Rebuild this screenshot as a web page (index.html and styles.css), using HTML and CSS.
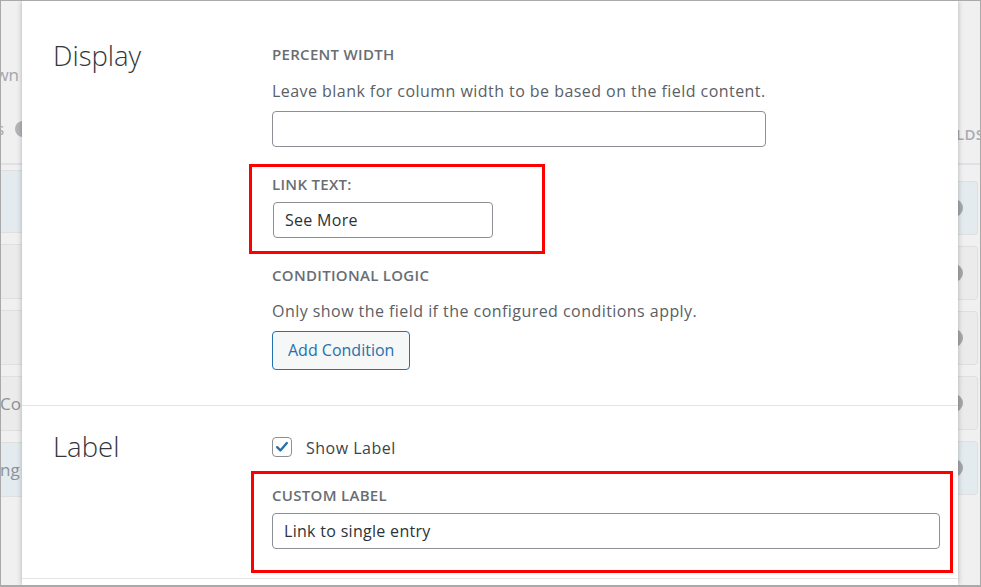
FILE: index.html
```html
<!DOCTYPE html>
<html lang="en">
<head>
<meta charset="utf-8">
<title>Field settings</title>
<link rel="stylesheet" href="styles.css">
</head>
<body>
<div class="frame">
  <div class="bg bg-left">
    <div class="bg-word bg-word-left">Dropdown</div>
    <div class="bg-help"><span class="bg-help-s">s</span><span class="bg-help-dot"></span></div>
    <div class="bg-line"></div>
    <div class="bg-rows bg-rows-left">
      <div class="bg-row blue r1"></div>
      <div class="bg-row gray"></div>
      <div class="bg-row gray"></div>
      <div class="bg-row gray"><span class="bg-row-text">Co</span></div>
      <div class="bg-row blue"><span class="bg-row-text">ng</span></div>
    </div>
  </div>

  <div class="modal">
    <section class="sec sec-display">
      <h2 class="sec-title">Display</h2>
      <div class="sec-body">
        <div class="field-label">Percent Width</div>
        <p class="desc">Leave blank for column width to be based on the field content.</p>
        <div class="text-input w-wide"></div>
        <div class="mark mark-link">
          <div class="field-label">Link Text:</div>
          <div class="text-input w-short">See More</div>
        </div>
        <div class="field-label after-mark">Conditional Logic</div>
        <p class="desc desc-second">Only show the field if the configured conditions apply.</p>
        <button class="btn" type="button">Add Condition</button>
      </div>
    </section>

    <section class="sec sec-label">
      <h2 class="sec-title">Label</h2>
      <div class="sec-body">
        <div class="check-row">
          <span class="checkbox"><svg viewBox="0 0 20 20" width="20" height="20" aria-hidden="true"><path d="M4.6 10.2l3.6 3.6 7.2-8.2" fill="none" stroke="#2271b1" stroke-width="2.6" stroke-linecap="round" stroke-linejoin="round"/></svg></span>
          <span class="check-text">Show Label</span>
        </div>
        <div class="mark mark-custom">
          <div class="field-label">Custom Label</div>
          <div class="text-input w-full">Link to single entry</div>
        </div>
      </div>
    </section>
  </div>

  <div class="bg bg-right">
    <div class="bg-word bg-word-right">LDS</div>
    <div class="bg-line bg-line-right"></div>
    <div class="bg-rows bg-rows-right">
      <div class="bg-row blue"><span class="bg-dot"></span></div>
      <div class="bg-row gray"><span class="bg-dot"></span></div>
      <div class="bg-row gray"><span class="bg-dot"></span></div>
      <div class="bg-row gray"><span class="bg-dot"></span></div>
      <div class="bg-row blue"><span class="bg-dot"></span></div>
    </div>
  </div>
</div>
</body>
</html>
```

FILE: styles.css
```css
* { box-sizing: border-box; }

html, body {
  margin: 0;
  padding: 0;
  background: #ffffff;
}

body {
  font-family: "Open Sans", "Noto Sans", "Liberation Sans", sans-serif;
  color: #50575e;
}

.frame {
  width: 981px;
  height: 587px;
  border: 1px solid #a9a9a9;
  border-bottom-width: 2px;
  display: flex;
  overflow: hidden;
  background: #f0f0f0;
}

/* ---------- dimmed backdrop strips ---------- */
.bg {
  display: flex;
  flex-direction: column;
  overflow: hidden;
  flex: none;
  background: #f0f0f0;
}

.bg-left { width: 21px; }
.bg-right { width: 22px; }

.bg-word {
  display: flex;
  white-space: nowrap;
  color: #a4a7aa;
}

.bg-word-left {
  justify-content: flex-end;
  padding-right: 3px;
  margin-top: 62px;
  height: 24px;
  font-size: 17px;
  line-height: 24px;
}

.bg-help {
  display: flex;
  align-items: center;
  justify-content: flex-end;
  margin-top: 34px;
  height: 16px;
  margin-right: -9px;
  gap: 11px;
  color: #a4a7aa;
  font-size: 16px;
}

.bg-help-s { margin-left: -6px; }

.bg-help-dot {
  width: 16px;
  height: 16px;
  border-radius: 50%;
  background: #b3b5b8;
  flex: none;
}

.bg-line {
  margin-top: 26px;
  height: 2px;
  background: #dee2e6;
  flex: none;
}

.bg-rows {
  display: flex;
  flex-direction: column;
}

.bg-rows-left { margin-top: 5px; gap: 11px; }

.bg-row {
  height: 55px;
  border: 1px solid #dfdfdf;
  flex: none;
  display: flex;
  align-items: center;
  overflow: hidden;
}

.bg-rows-left .bg-row { border-left: none; border-right: none; }
.bg-rows-left .r1 { height: 63px; }

.bg-row.blue { background: #e3ebef; }
.bg-row.gray { background: #ebebeb; }

.bg-row-text {
  font-size: 17px;
  color: #8d9296;
  margin-left: -1px;
  white-space: nowrap;
}

.bg-word-right {
  margin-top: 123px;
  height: 20px;
  margin-left: -2px;
  font-size: 15px;
  line-height: 20px;
  font-weight: 600;
  letter-spacing: 0.3px;
  color: #a9acaf;
}

.bg-line-right { margin-top: 19px; }

.bg-rows-right { margin-top: 16px; gap: 11px; }

.bg-rows-right .bg-row {
  height: 54px;
  border-left: none;
  border-radius: 0 4px 4px 0;
  margin-right: 2px;
}

.bg-dot {
  width: 18px;
  height: 18px;
  border-radius: 50%;
  background: #a5a7aa;
  margin-left: -13px;
  flex: none;
}

/* ---------- modal ---------- */
.modal {
  width: 936px;
  flex: none;
  background: #ffffff;
  box-shadow: 0 0 5px rgba(0, 0, 0, 0.28);
  position: relative;
  z-index: 1;
}

.sec {
  display: grid;
  grid-template-columns: 219px 1fr;
  padding-left: 31px;
  padding-right: 18px;
}

.sec-display {
  padding-top: 43px;
  padding-bottom: 35px;
}

.sec-label {
  border-top: 1px solid #e2e4e7;
  border-bottom: 1px solid #e2e4e7;
  padding-top: 31px;
  padding-bottom: 5px;
}

.sec-title {
  margin: -8px 0 0;
  font-size: 27.5px;
  line-height: 36px;
  font-weight: 300;
  color: #32373c;
}

.sec-display .sec-title { margin-top: -6px; }

.sec-body {
  display: flex;
  flex-direction: column;
  align-items: flex-start;
}

.field-label {
  font-size: 15px;
  line-height: 20px;
  font-weight: 600;
  letter-spacing: 0.3px;
  text-transform: uppercase;
  color: #686e74;
}

.desc {
  margin: 15px 0 0;
  font-size: 16px;
  line-height: 24px;
  letter-spacing: 0.45px;
  color: #5a6066;
}

.desc-second { margin-top: 14px; }

.text-input {
  margin-top: 8px;
  height: 36px;
  border: 1px solid #8c8f94;
  border-radius: 4px;
  background: #ffffff;
  padding: 0 11px;
  font-size: 16px;
  line-height: 34px;
  letter-spacing: 0.3px;
  color: #2c3338;
  white-space: nowrap;
}

.w-wide { width: 494px; }
.w-short { width: 220px; margin-left: 1px; }
.w-full { width: 100%; }

.mark {
  border: 3px solid #fe0000;
}

.mark-link {
  margin-top: 17px;
  margin-left: -23px;
  width: 296px;
  padding: 7px 20px 13px;
}

.mark-custom {
  margin-top: 14px;
  margin-left: -21px;
  margin-right: -13px;
  align-self: stretch;
  padding: 11px 10px 21px 18px;
}

.after-mark { margin-top: 11px; }

.btn {
  margin-top: 8px;
  height: 39px;
  padding: 0 15px;
  border: 1px solid #2271b1;
  border-radius: 4px;
  background: #f6f7f7;
  color: #2271b1;
  font-family: inherit;
  font-size: 16px;
  line-height: 37px;
  cursor: pointer;
}

.check-row {
  display: flex;
  align-items: center;
  height: 20px;
}

.checkbox {
  width: 20px;
  height: 20px;
  border: 1px solid #8c8f94;
  border-radius: 4px;
  background: #ffffff;
  display: flex;
  align-items: center;
  justify-content: center;
  flex: none;
}

.checkbox svg { display: block; }

.check-text {
  margin-left: 14px;
  font-size: 16px;
  line-height: 20px;
  letter-spacing: 0.5px;
  color: #3c434a;
  position: relative;
  top: 1px;
}
```
